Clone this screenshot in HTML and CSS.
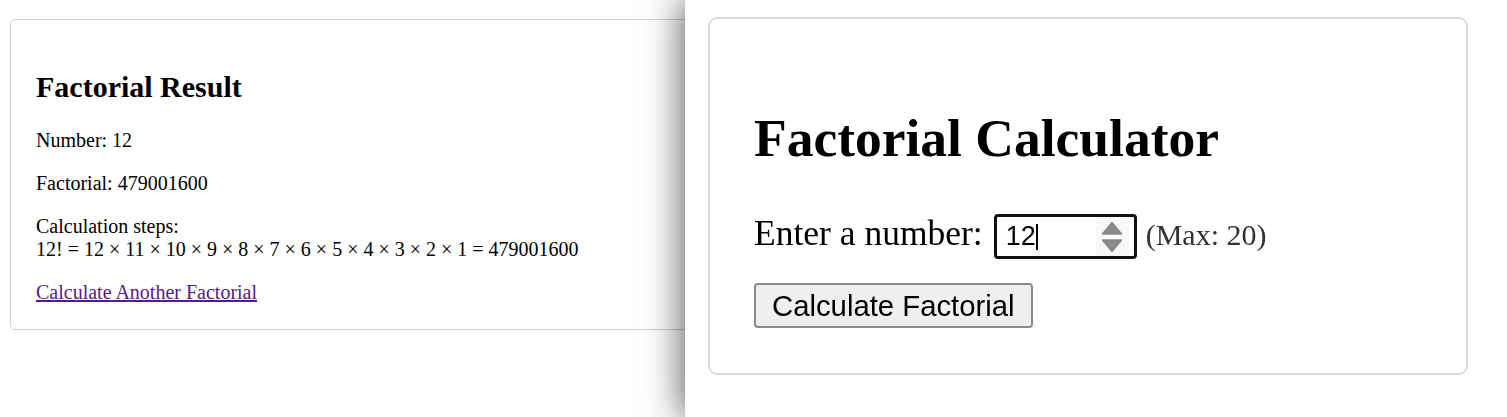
FILE: index.html
```html
<!DOCTYPE html>
<html lang="en">
<head>
<meta charset="utf-8">
<title>Factorial</title>
<link rel="stylesheet" href="styles.css">
</head>
<body>
<main class="result-page">
  <section class="result-card">
    <h2 class="result-title">Factorial Result</h2>
    <p class="result-line">Number: 12</p>
    <p class="result-line">Factorial: 479001600</p>
    <p class="result-line">Calculation steps:<br>12! = 12 × 11 × 10 × 9 × 8 × 7 × 6 × 5 × 4 × 3 × 2 × 1 = 479001600</p>
    <a class="again-link" href="#">Calculate Another Factorial</a>
  </section>
</main>
<aside class="calc-panel">
  <section class="calc-card">
    <h1 class="calc-title">Factorial Calculator</h1>
    <div class="calc-row">
      <label class="calc-label">Enter a number:</label>
      <span class="num-input">
        <span class="num-value">12</span><span class="caret"></span>
        <span class="spinner">
          <svg width="22" height="32" viewBox="0 0 22 32">
            <path d="M11 1.5 L20.5 13 L1.5 13 Z" fill="#8a8a8a" stroke="#8a8a8a" stroke-width="1.5" stroke-linejoin="round"/>
            <path d="M11 30.5 L20.5 19 L1.5 19 Z" fill="#8a8a8a" stroke="#8a8a8a" stroke-width="1.5" stroke-linejoin="round"/>
          </svg>
        </span>
      </span>
      <span class="max-note">(Max: 20)</span>
    </div>
    <button class="calc-btn" type="button">Calculate Factorial</button>
  </section>
</aside>
</body>
</html>
```

FILE: styles.css
```css
html, body {
  margin: 0;
  padding: 0;
  background: #fff;
}

body {
  font-family: "Liberation Serif", "Times New Roman", serif;
  color: #000;
  overflow: hidden;
}

.result-page {
  padding: 19px 10px;
}

.result-card {
  border: 1px solid #cfcfcf;
  border-radius: 5px;
  padding: 25px;
  font-size: 20px;
}

.result-title {
  font-size: 30px;
  font-weight: bold;
  margin: 25px 0;
}

.result-line {
  margin: 20px 0;
}

.again-link {
  color: #551a8b;
  text-decoration: underline;
}

.calc-panel {
  position: fixed;
  top: 0;
  bottom: 0;
  left: 685px;
  right: 0;
  background: #fff;
  box-shadow: -4px 0 34px rgba(0, 0, 0, 0.6);
  padding: 17px 39px 0 23px;
}

.calc-card {
  border: 2px solid #dcdcdc;
  border-radius: 9px;
  padding: 0 44px 45px;
}

.calc-title {
  font-size: 53.5px;
  font-weight: bold;
  margin: 0;
  padding-top: 88px;
  margin-bottom: 43px;
}

.calc-row {
  display: flex;
  align-items: baseline;
}

.calc-label {
  font-size: 35.5px;
  margin-right: 11px;
}

.num-input {
  display: inline-flex;
  align-items: center;
  box-sizing: border-box;
  width: 143px;
  height: 45px;
  border: 3px solid #111;
  border-radius: 4px;
  padding-left: 9px;
  font-family: "Liberation Sans", Arial, sans-serif;
  font-size: 27px;
  line-height: 1;
}

.num-value {
  line-height: 1;
}

.caret {
  display: inline-block;
  width: 2px;
  height: 26px;
  background: #000;
  align-self: center;
}

.spinner {
  margin-left: auto;
  align-self: stretch;
  width: 33px;
  background: #f8f8f8;
  display: flex;
  align-items: center;
  justify-content: center;
  margin-right: 5px;
}

.spinner svg {
  display: block;
}

.max-note {
  font-size: 30px;
  color: #333;
  margin-left: 9px;
}

.calc-btn {
  display: block;
  margin-top: 24px;
  box-sizing: border-box;
  height: 45px;
  padding: 0 16px;
  font-family: "Liberation Sans", Arial, sans-serif;
  font-size: 29.3px;
  color: #000;
  background: #efefef;
  border: 2px solid #8a8a8a;
  border-radius: 4px;
}
```
